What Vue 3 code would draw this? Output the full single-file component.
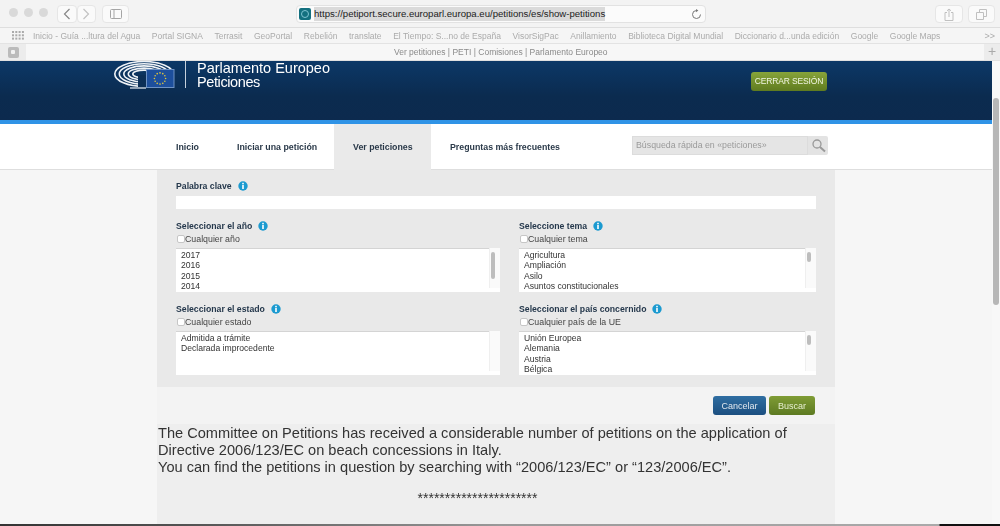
<script setup>
const bookmarks = [
  'Inicio - Guía ...ltura del Agua', 'Portal SIGNA', 'Terrasit', 'GeoPortal', 'Rebelión',
  'translate', 'El Tiempo: S...no de España', 'VisorSigPac', 'Anillamiento',
  'Biblioteca Digital Mundial', 'Diccionario d...unda edición', 'Google', 'Google Maps'
]
const navItems = [
  { label: 'Inicio', width: 61 },
  { label: 'Iniciar una petición', width: 116 },
  { label: 'Ver peticiones', width: 97, active: true },
  { label: 'Preguntas más frecuentes', width: 201 }
]
const fields = [
  { title: 'Seleccionar el año', any: 'Cualquier año', items: ['2017', '2016', '2015', '2014'], thumb: 'long' },
  { title: 'Seleccione tema', any: 'Cualquier tema', items: ['Agricultura', 'Ampliación', 'Asilo', 'Asuntos constitucionales'], thumb: 'short' },
  { title: 'Seleccionar el estado', any: 'Cualquier estado', items: ['Admitida a trámite', 'Declarada improcedente'], thumb: 'none' },
  { title: 'Seleccionar el país concernido', any: 'Cualquier país de la UE', items: ['Unión Europea', 'Alemania', 'Austria', 'Bélgica'], thumb: 'short' }
]
const stars = Array.from({ length: 12 }, (_, i) => {
  const a = (i * Math.PI) / 6
  return { cx: 160 + 5.6 * Math.cos(a), cy: 78.5 + 5.6 * Math.sin(a) }
})
const arcs = [[30, 13], [25.5, 10.8], [21, 8.6], [16.5, 6.4], [12, 4.4]]
</script>

<template>
  <div class="window">
    <header class="toolbar">
      <div class="lights"><i></i><i></i><i></i></div>
      <div class="btn-pair">
        <button class="tool nav-btn" aria-label="Atrás">
          <svg width="8" height="12" viewBox="0 0 8 12"><path d="M6.5 1 1.5 6l5 5" fill="none" stroke="#888" stroke-width="1.2"/></svg>
        </button>
        <button class="tool nav-btn" aria-label="Adelante">
          <svg width="8" height="12" viewBox="0 0 8 12"><path d="M1.5 1l5 5-5 5" fill="none" stroke="#c2c2c2" stroke-width="1.2"/></svg>
        </button>
      </div>
      <button class="tool side-btn" aria-label="Barra lateral">
        <svg width="12" height="10" viewBox="0 0 12 10"><rect x=".5" y=".5" width="11" height="9" rx="1" fill="none" stroke="#a5a5a5"/><path d="M4 .5v9" stroke="#a5a5a5"/></svg>
      </button>
      <div class="url">
        <span class="favicon"><b></b></span>
        <span class="url-text">https://petiport.secure.europarl.europa.eu/petitions/es/show-petitions</span>
        <svg class="reload" width="11" height="11" viewBox="0 0 11 11"><path d="M5.5 1.5a4 4 0 1 0 4 4" fill="none" stroke="#777"/><path d="M5 0l2.4 1.6L5 3.2z" fill="#777"/></svg>
      </div>
      <button class="tool share" aria-label="Compartir">
        <svg width="10" height="13" viewBox="0 0 10 13"><path d="M3 4.500H1v8h8v-8H7M5 9V1M3 2.800 5 1l2 1.800" fill="none" stroke="#c0c0c0"/></svg>
      </button>
      <button class="tool tabs-btn" aria-label="Pestañas">
        <svg width="11" height="11" viewBox="0 0 11 11"><path d="M3.500 3V.5h7v7H8M.5 3.500h7v7h-7z" fill="none" stroke="#c0c0c0"/></svg>
      </button>
    </header>

    <nav class="bookmarks">
      <svg class="grid-icon" width="12" height="9" viewBox="0 0 12 9" fill="#aaa">
        <template v-for="r in 3" :key="r"><rect v-for="c in 4" :key="c" :x="(c - 1) * 3.300" :y="(r - 1) * 3.300" width="2" height="2"/></template>
      </svg>
      <span v-for="b in bookmarks" :key="b" class="bookmark">{{ b }}</span>
      <span class="more">&gt;&gt;</span>
    </nav>

    <div class="tabbar">
      <span class="tab-left"><i><u></u></i></span>
      <span class="tab-title">Ver petitiones | PETI | Comisiones | Parlamento Europeo</span>
      <span class="tab-plus">+</span>
    </div>

    <div class="viewport">
      <div class="page">
        <div class="site-head">
          <svg class="logo" width="62" height="28" viewBox="113 61 62 28">
            <g fill="none" stroke="#eef2f6" stroke-width="1.600">
              <ellipse v-for="(a, i) in arcs" :key="i" cx="144" cy="74" :rx="a[0] - .8" :ry="a[1] - .5"/>
            </g>
            <rect x="138" y="75" width="8" height="14" fill="#0c2f56"/>
            <path d="M130 88H146" stroke="#eef2f6" stroke-width="1.200"/>
            <rect x="146.500" y="69.500" width="27.500" height="18" fill="#1d4f9c" stroke="#6f93c4"/>
            <circle v-for="(s, i) in stars" :key="i" :cx="s.cx" :cy="s.cy" r=".8" fill="#e3c83a"/>
          </svg>
          <span class="divider"></span>
          <div class="site-title">
            <div class="t1">Parlamento Europeo</div>
            <div class="t2">Peticiones</div>
          </div>
          <a class="logout">CERRAR SESIÓN</a>
        </div>

        <div class="site-nav">
          <a v-for="n in navItems" :key="n.label" class="nav-item" :class="{ active: n.active }" :style="{ width: n.width + 'px' }">{{ n.label }}</a>
          <div class="search">
            <div class="search-input">Búsqueda rápida en «peticiones»</div>
            <div class="search-btn">
              <svg width="15" height="15" viewBox="0 0 15 15"><circle cx="6" cy="6" r="4" fill="none" stroke="#999" stroke-width="1.300"/><path d="M9 9l5 4.500" stroke="#999" stroke-width="2"/></svg>
            </div>
          </div>
        </div>

        <main class="column">
          <section class="form">
            <div class="label">Palabra clave
              <svg class="info" width="10" height="10" viewBox="0 0 10 10"><circle cx="5" cy="5" r="4.700" fill="#1b9ad0"/><rect x="4.200" y="1.800" width="1.600" height="1.500" fill="#fff"/><rect x="4.200" y="4" width="1.600" height="4" fill="#fff"/></svg>
            </div>
            <div class="keyword"></div>
            <div class="grid">
              <div v-for="f in fields" :key="f.title" class="field">
                <div class="label">{{ f.title }}
                  <svg class="info" width="10" height="10" viewBox="0 0 10 10"><circle cx="5" cy="5" r="4.700" fill="#1b9ad0"/><rect x="4.200" y="1.800" width="1.600" height="1.500" fill="#fff"/><rect x="4.200" y="4" width="1.600" height="4" fill="#fff"/></svg>
                </div>
                <div class="any"><span class="check"></span>{{ f.any }}</div>
                <div class="list">
                  <div class="options"><div v-for="o in f.items" :key="o">{{ o }}</div></div>
                  <div class="list-track"><span v-if="f.thumb !== 'none'" class="list-thumb" :class="f.thumb"></span></div>
                </div>
              </div>
            </div>
          </section>
          <div class="actions">
            <button class="act cancel">Cancelar</button>
            <button class="act search-go">Buscar</button>
          </div>
          <article class="notice">
            <p>The Committee on Petitions has received a considerable number of petitions on the application of Directive 2006/123/EC on beach concessions in Italy.<br>You can find the petitions in question by searching with “2006/123/EC” or “123/2006/EC”.</p>
            <p class="stars">**********************</p>
          </article>
        </main>
      </div>
      <div class="scrollbar"><span></span></div>
    </div>
    <div class="edge"></div>
  </div>
</template>

<style>
html, body { margin: 0; overflow: hidden; background: #f5f5f5; }
</style>

<style scoped>
.window { width: 1000px; height: 526px; overflow: hidden; display: flex; flex-direction: column; font-family: "Liberation Sans", Arial, sans-serif; color: #333; filter: blur(.35px); }
button { font-family: inherit; padding: 0; }

.toolbar { height: 28px; box-sizing: border-box; flex: none; display: flex; align-items: flex-start; padding-top: 5px; background: #f3f3f3; border-bottom: 1px solid #dedede; }
.lights { display: flex; gap: 6px; margin: 3px 0 0 9px; width: 48px; }
.lights i { width: 9px; height: 9px; border-radius: 50%; background: #d9d9d9; }
.tool { display: flex; align-items: center; justify-content: center; height: 18px; background: #fafafa; border: 1px solid #e6e6e6; border-radius: 4px; box-sizing: border-box; }
.btn-pair { display: flex; }
.nav-btn { width: 19.500px; }
.side-btn { width: 27px; margin-left: 6px; }
.url { width: 410px; height: 18px; margin-left: 167px; box-sizing: border-box; display: flex; align-items: center; background: #fbfbfb; border: 1px solid #e2e2e2; border-radius: 4px; padding-left: 2px; }
.favicon { width: 12px; height: 12px; background: #13707f; border-radius: 2px; display: flex; align-items: center; justify-content: center; margin-right: 3px; }
.favicon b { width: 6px; height: 6px; border: 1px solid #7fc4d2; border-radius: 50%; }
.url-text { font-size: 9.600px; background: #dadada; color: #222; line-height: 14px; white-space: nowrap; }
.reload { margin-left: auto; margin-right: 3px; }
.share { width: 28px; margin-left: 229px; }
.tabs-btn { width: 27px; margin-left: 5px; }

.bookmarks { height: 16px; flex: none; display: flex; align-items: center; padding-left: 12px; background: #f5f5f5; border-bottom: 1px solid #e3e3e3; box-sizing: border-box; }
.grid-icon { margin-right: 9px; }
.bookmark { font-size: 8.500px; color: #ababab; white-space: nowrap; margin-right: 11.600px; }
.more { font-size: 9px; color: #aaa; margin-left: auto; margin-right: 5px; }

.tabbar { height: 17px; flex: none; display: flex; align-items: center; background: #f7f7f7; border-bottom: 1px solid #e0e0e0; box-sizing: border-box; }
.tab-left { width: 26px; height: 100%; background: #ececec; display: flex; align-items: center; justify-content: center; }
.tab-left i { width: 11px; height: 11px; background: #bbb; border-radius: 2px; display: flex; align-items: center; justify-content: center; }
.tab-left u { width: 4px; height: 4px; background: #f1f1f1; border-radius: 1px; }
.tab-title { font-size: 8.500px; color: #8a8a8a; margin-left: 368px; white-space: nowrap; width: 590px; }
.tab-plus { width: 16px; height: 100%; text-align: center; font-size: 14px; line-height: 15px; color: #aaa; background: #ececec; }

.viewport { flex: 1; min-height: 0; display: flex; }
.page { width: 992px; flex: none; background: #f6f6f6; }

.site-head { height: 59px; border-bottom: 4px solid #2f93e6; background: linear-gradient(#0c3867, #0b2b4f 60%, #0c2a4e); display: flex; align-items: flex-start; padding-left: 113px; }
.logo { display: block; flex: none; }
.divider { width: 1px; height: 27px; background: #c5d0dc; margin-left: 10px; }
.site-title { margin-left: 11px; color: #fff; font-size: 14.500px; line-height: 14px; }
.t2 { letter-spacing: -.4px; }
.logout { margin: 11px 165px 0 auto; width: 76px; height: 19px; box-sizing: border-box; border-radius: 3px; background: linear-gradient(#87a43a, #5f7b1f); color: #f1f5e2; font-size: 8.500px; letter-spacing: -.15px; line-height: 19px; text-align: center; }

.site-nav { height: 46px; background: #fff; display: flex; padding-left: 157px; border-bottom: 1px solid #dedede; box-sizing: border-box; }
.nav-item { font-size: 8.800px; font-weight: 700; color: #2b3a4a; line-height: 46px; box-sizing: border-box; white-space: nowrap; padding-left: 19px; flex: none; }
.nav-item.active { background: #eaeaea; margin-bottom: -1px; }
.search { display: flex; margin-top: 12px; }
.search-input { width: 176px; height: 19px; box-sizing: border-box; background: #e5e5e5; border: 1px solid #dcdcdc; color: #9a9a9a; font-size: 8.800px; line-height: 16px; padding-left: 3px; white-space: nowrap; }
.search-btn { width: 20px; height: 19px; background: #e3e3e3; border-radius: 0 2px 2px 0; display: flex; align-items: center; justify-content: center; }

.column { width: 678px; margin-left: 157px; }
.form { background: #e9e9e9; height: 217px; box-sizing: border-box; padding: 10px 19px 0; }
.label { display: flex; align-items: center; gap: 6px; height: 11px; font-size: 8.700px; font-weight: 700; color: #25384c; white-space: nowrap; }
.keyword { height: 13px; margin-top: 5px; background: #fff; }
.grid { display: grid; grid-template-columns: 324px 297px; column-gap: 19px; row-gap: 10px; margin-top: 11px; }
.field { height: 73px; }
.any { display: flex; align-items: center; height: 13px; margin-top: 1px; font-size: 8.800px; color: #444; white-space: nowrap; }
.check { width: 8px; height: 8px; background: #fff; border: 1px solid #c6c6c6; border-radius: 2px; box-sizing: border-box; margin-left: 1px; }
.list { display: flex; height: 44px; margin-top: 3px; background: #fff; box-shadow: inset 0 1px 0 #d4d4d4; overflow: hidden; }
.options { flex: 1; padding: 2px 0 0 5px; font-size: 8.600px; line-height: 10.300px; color: #333; }
.list-track { width: 11px; border-left: 1px solid #efefef; background: #fafafa; margin-bottom: 4px; box-sizing: border-box; padding: 4px 0 0 1px; }
.list-thumb { display: block; width: 4px; border-radius: 2px; background: #bdbdbd; }
.list-thumb.long { height: 27px; }
.list-thumb.short { height: 10px; }

.actions { height: 37px; background: #f3f3f3; display: flex; justify-content: flex-end; gap: 3px; padding: 9px 20px 0 0; box-sizing: border-box; }
.act { height: 19px; border: 0; border-radius: 3px; color: #dfe7ee; font-size: 9px; }
.cancel { width: 53px; background: linear-gradient(#2f6ea2, #1c4f80); }
.search-go { width: 46px; background: linear-gradient(#7f9c35, #5d7a22); color: #e7efd0; }

.notice { height: 103px; background: #eeeeee; font-size: 14.600px; line-height: 17px; color: #333; padding: 1px 38px 0 1px; box-sizing: border-box; overflow: hidden; }
.notice p { margin: 0; }
.notice .stars { text-align: center; font-size: 14px; line-height: 16px; margin-top: 14px; }

.scrollbar { flex: 1; background: #f8f8f8; padding: 37px 1px 0; box-sizing: border-box; }
.scrollbar span { display: block; height: 207px; background: #b7b7b7; border-radius: 3px; }
.edge { flex: none; height: 2px; background: linear-gradient(90deg, #333 0, #555 200px, #999 500px, #aaa 939px, #111 940px); }
</style>
